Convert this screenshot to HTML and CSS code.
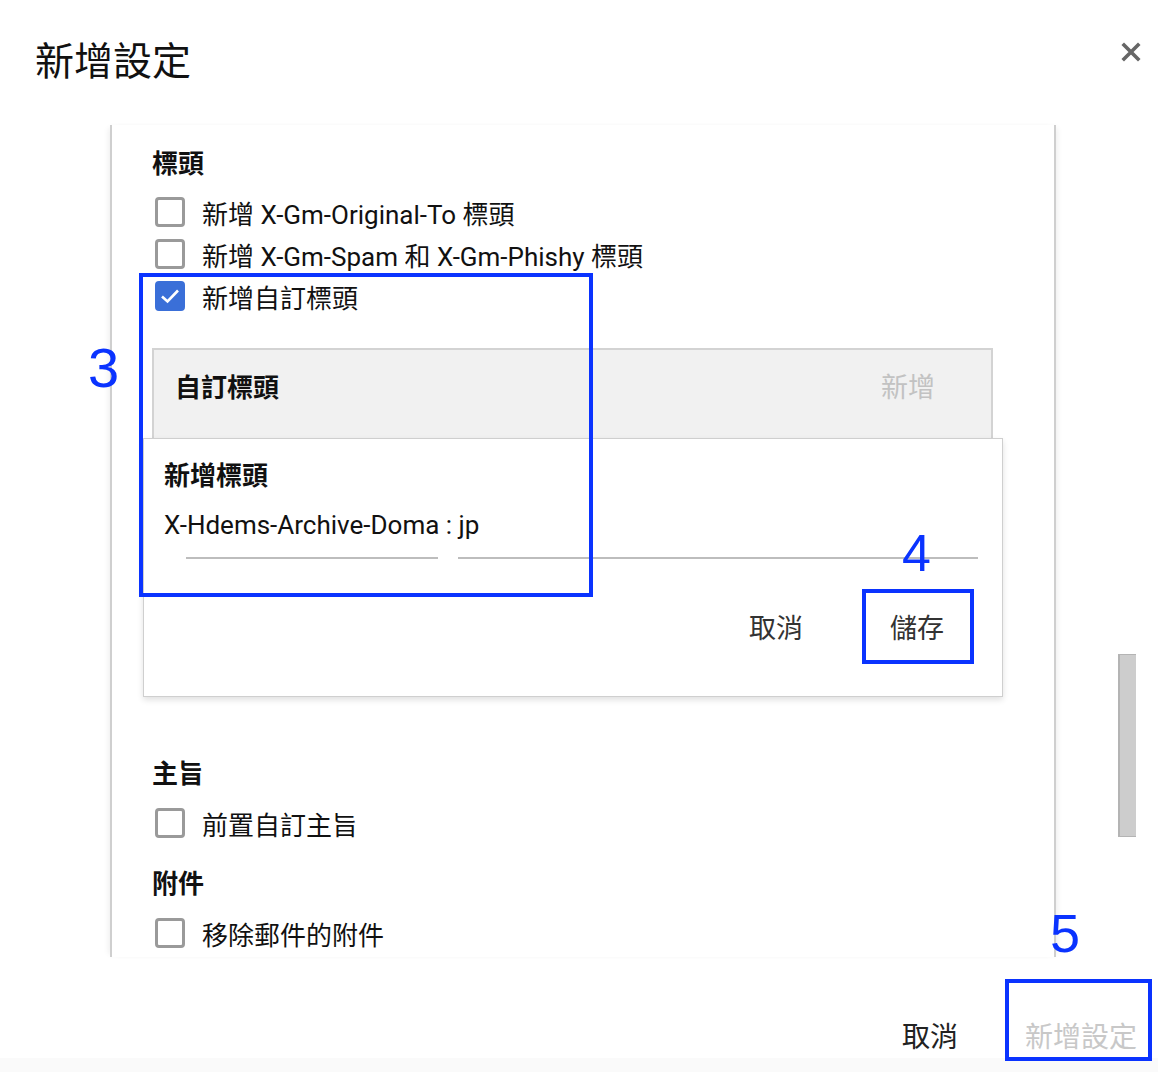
FILE: index.html
```html
<!DOCTYPE html>
<html lang="zh-Hant">
<head>
  <meta charset="UTF-8">
  <title>新增設定</title>
  <link rel="stylesheet" href="styles.css">
</head>
<body>

<div class="dialog">
  <header class="dialog-head">
    <h1>新增設定</h1>
    <button class="close" aria-label="關閉">
      <svg width="20" height="20" viewBox="0 0 20 20"><path d="M3 3 L17 17 M17 3 L3 17" stroke="#666" stroke-width="3.6" stroke-linecap="square"/></svg>
    </button>
  </header>

  <div class="panel">
    <div class="panel-body">
      <h3>標頭</h3>
      <div class="options">
        <label class="opt"><span class="box"></span>新增 X-Gm-Original-To 標頭</label>
        <label class="opt"><span class="box"></span>新增 X-Gm-Spam 和 X-Gm-Phishy 標頭</label>
        <label class="opt"><span class="box checked"><svg width="20" height="16" viewBox="0 0 20 16"><path d="M2 8.5 L7.5 13.5 L18 2.5" fill="none" stroke="#fff" stroke-width="2.6"/></svg></span>新增自訂標頭</label>
      </div>

      <div class="custom-head">
        <span class="custom-title">自訂標頭</span>
        <span class="custom-add">新增</span>
      </div>

      <div class="card">
        <div class="card-title">新增標頭</div>
        <div class="card-value">X-Hdems-Archive-Doma : jp</div>
        <div class="fields">
          <span class="field short"></span>
          <span class="field long"></span>
        </div>
        <div class="card-actions">
          <button class="text-btn">取消</button>
          <button class="text-btn">儲存</button>
        </div>
      </div>

      <h3 class="sub">主旨</h3>
      <label class="opt"><span class="box"></span>前置自訂主旨</label>

      <h3 class="sub2">附件</h3>
      <label class="opt"><span class="box"></span>移除郵件的附件</label>
    </div>
  </div>
  <div class="thumb"></div>

  <footer class="dialog-foot">
    <button class="text-btn foot-cancel">取消</button>
    <button class="text-btn foot-add">新增設定</button>
  </footer>

  <!-- annotations -->
  <div class="mark mark-3"></div>
  <div class="num num-3">3</div>
  <div class="mark mark-4"></div>
  <div class="num num-4">4</div>
  <div class="mark mark-5"></div>
  <div class="num num-5">5</div>
</div>

</body>
</html>
```

FILE: styles.css
```css
body {
  margin: 0;
  background: #fff;
  font-family: Roboto, "Noto Sans CJK TC", sans-serif;
  color: #111;
}
.dialog {
  position: relative;
  width: 1158px;
  height: 1072px;
  overflow: hidden;
}
.dialog-head {
  height: 125px;
  box-sizing: border-box;
  padding: 37px 0 0 35px;
  display: flex;
  justify-content: space-between;
  align-items: flex-start;
}
.dialog-head h1 {
  margin: 0;
  font-size: 39px;
  line-height: 50px;
  font-weight: 400;
  color: #111;
}
.close {
  background: none;
  border: none;
  padding: 0;
  margin: 5px 17px 0 0;
  width: 20px;
  height: 20px;
  cursor: pointer;
}
.panel {
  margin-left: 110px;
  width: 946px;
  height: 832px;
  box-sizing: border-box;
  border-left: 2px solid #cfcfcf;
  border-right: 2px solid #cfcfcf;
  box-shadow: -4px 0 6px -3px rgba(0,0,0,0.08), 4px 0 6px -3px rgba(0,0,0,0.08);
  overflow: hidden;
}
.panel-body {
  padding: 24px 0 0 40px;
}
h3 {
  margin: 0;
  font-size: 26px;
  line-height: 30px;
  font-weight: 700;
}
h3.sub { margin-top: 62px; }
h3.sub2 { margin-top: 25px; }
.options {
  margin-top: 12px;
}
.opt {
  display: flex;
  align-items: center;
  height: 42px;
  font-size: 26px;
  color: #111;
}
.sub + .opt, .sub2 + .opt { margin-top: 13px; }
.box {
  width: 30px;
  height: 30px;
  box-sizing: border-box;
  border: 3px solid #9a9a9a;
  border-radius: 4px;
  margin: 0 17px 0 3px;
  display: flex;
  align-items: center;
  justify-content: center;
}
.box.checked {
  background: #3a6fd8;
  border-color: #3a6fd8;
}
.custom-head {
  margin-top: 31px;
  width: 841px;
  height: 90px;
  box-sizing: border-box;
  background: #f1f1f1;
  border: 2px solid #d3d3d3;
  border-bottom: none;
  padding: 23px 56px 0 21px;
  display: flex;
  justify-content: space-between;
}
.custom-title {
  font-size: 26px;
  line-height: 30px;
  font-weight: 700;
}
.custom-add {
  font-size: 27px;
  line-height: 30px;
  color: #c2c2c2;
}
.card {
  margin-left: -9px;
  width: 860px;
  height: 259px;
  box-sizing: border-box;
  background: #fff;
  border: 1px solid #cfcfcf;
  box-shadow: 0 3px 6px rgba(0,0,0,0.12);
  padding: 22px 24px 0 20px;
}
.card-title {
  font-size: 26px;
  line-height: 30px;
  font-weight: 700;
}
.card-value {
  margin-top: 18px;
  font-size: 26px;
  line-height: 32px;
  color: #111;
}
.fields {
  margin-top: 16px;
  margin-left: 22px;
  display: flex;
  gap: 20px;
}
.field {
  height: 2px;
  background: #bdbdbd;
}
.field.short { width: 252px; }
.field.long { width: 520px; }
.card-actions {
  margin-top: 42px;
  display: flex;
  justify-content: flex-end;
  gap: 55px;
  padding-right: 18px;
}
.text-btn {
  background: none;
  border: none;
  padding: 0 16px;
  height: 50px;
  font-family: Roboto, "Noto Sans CJK TC", sans-serif;
  font-size: 27px;
  color: #333;
  cursor: pointer;
}
.thumb {
  position: absolute;
  left: 1118px;
  top: 654px;
  width: 18px;
  height: 183px;
  box-sizing: border-box;
  background: #cdcdcd;
  border-left: 2px solid #b4b4b4;
  border-top: 1px solid #b4b4b4;
  border-bottom: 1px solid #b4b4b4;
}
.dialog-foot {
  height: 115px;
  box-sizing: border-box;
  padding: 53px 5px 0 0;
  display: flex;
  justify-content: flex-end;
  gap: 37px;
  border-bottom: 14px solid #fafafa;
}
.foot-cancel { color: #222; font-size: 28px; margin-right: -2px; }
.foot-add { color: #c8c8c8; font-size: 28px; }
.mark {
  position: absolute;
  border: 4px solid #0a33ff;
  box-sizing: border-box;
}
.mark-3 { left: 139px; top: 273px; width: 454px; height: 324px; }
.mark-4 { left: 862px; top: 589px; width: 112px; height: 75px; }
.mark-5 { left: 1005px; top: 979px; width: 147px; height: 82px; }
.num {
  position: absolute;
  font-family: "Liberation Sans", Arial, sans-serif;
  color: #0a33ff;
  line-height: 1;
}
.num-3 { left: 88px; top: 340px; font-size: 56px; }
.num-4 { left: 902px; top: 527px; font-size: 52px; }
.num-5 { left: 1050px; top: 906px; font-size: 54px; }
```
